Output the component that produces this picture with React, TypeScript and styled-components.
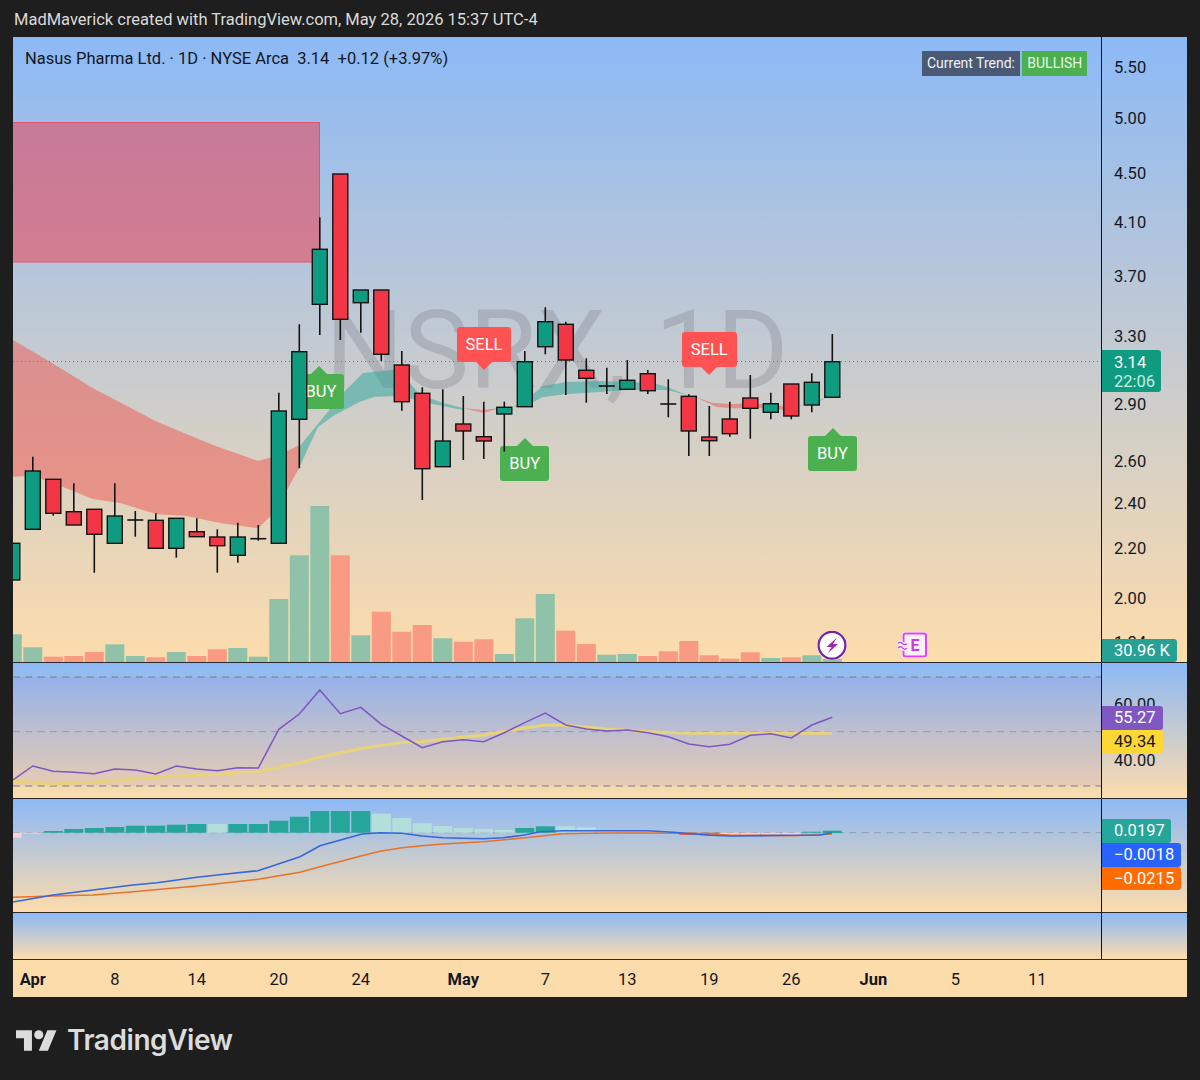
import { createGlobalStyle, styled } from "styled-components";

type Candle = [number, number, number, number, "g" | "r" | "d"];

// [bodyTop, bodyBottom, wickTop, wickBottom, kind], page pixels
const candles: Candle[] = [
  [543.3, 580, 543.3, 580, "g"],
  [471, 529.3, 456.7, 529.3, "g"],
  [479.3, 513.3, 479.3, 515.7, "r"],
  [511.7, 525, 483.3, 525, "r"],
  [509.3, 534.3, 509.3, 572.7, "r"],
  [516, 543.3, 483.3, 543.3, "g"],
  [520, 520, 511, 536.7, "d"],
  [520.3, 548.3, 513.3, 548.3, "r"],
  [518.3, 548.3, 518.3, 557.7, "g"],
  [531.7, 536.7, 518.3, 536.7, "r"],
  [537, 545.7, 529.3, 572.7, "r"],
  [537, 555.3, 522.7, 562.7, "g"],
  [538.7, 538.7, 525, 540.7, "d"],
  [411, 543.3, 392.7, 543.3, "g"],
  [351.7, 419.3, 324.3, 468.3, "g"],
  [249.3, 304.3, 217.3, 335, "g"],
  [174, 319.3, 174, 340, "r"],
  [290, 302.7, 290, 332.7, "g"],
  [290, 354.3, 290, 361, "r"],
  [365, 401.7, 351, 410.7, "r"],
  [393.3, 468.7, 387.3, 500, "r"],
  [441, 466.7, 389.3, 466.7, "g"],
  [424, 431, 396, 460, "r"],
  [436.7, 441, 401.7, 459, "r"],
  [407.3, 414, 401.7, 451.7, "g"],
  [361.7, 406.7, 351, 406.7, "g"],
  [321.7, 346.7, 307.3, 354.3, "g"],
  [324.3, 360, 321.7, 395, "r"],
  [370.3, 378.3, 358.3, 402.7, "r"],
  [386, 386, 367.7, 394, "d"],
  [380.3, 389.3, 360, 389.3, "g"],
  [373.7, 390.7, 370, 394, "r"],
  [404, 404, 379.3, 417.3, "d"],
  [396.3, 431, 394.3, 456, "r"],
  [437, 440.7, 406, 456, "r"],
  [419, 433.7, 401.7, 436.7, "r"],
  [398, 408.3, 375, 438.7, "r"],
  [403.7, 412.3, 392.7, 419.3, "g"],
  [384, 416, 384, 419.3, "r"],
  [382.3, 405, 373.3, 412.3, "g"],
  [361.7, 397.3, 334, 397.3, "g"],
];

const volumes: [number, "g" | "r"][] = [
  [634.3, "g"], [647.3, "g"], [656.7, "r"], [656, "r"], [652, "r"], [644.3, "g"], [656, "g"],
  [657.3, "r"], [652, "g"], [656, "r"], [649.3, "r"], [648, "g"], [656.7, "g"], [599, "g"],
  [555.3, "g"], [506, "g"], [555.3, "r"], [635.3, "g"], [611.7, "r"], [631.7, "r"], [625, "r"],
  [638.3, "g"], [641.7, "r"], [639.3, "r"], [654, "g"], [618.3, "g"], [594, "g"], [630.7, "r"],
  [644, "r"], [654.7, "g"], [654, "g"], [656, "r"], [651.3, "r"], [641, "r"], [655.3, "r"],
  [658.7, "r"], [652.3, "r"], [658, "g"], [657.3, "r"], [655.3, "g"], [659, "g"],
];

const rsi = [
  780, 766, 771.3, 772.3, 773.7, 769, 770, 774, 766, 769, 770.7, 767.7, 768, 729.3, 714, 690, 713.7,
  707.3, 724.3, 736, 747.7, 741.7, 739.7, 741.7, 732.7, 722.7, 713, 725, 729, 731, 730, 732.7, 736.7,
  744, 746.7, 744.3, 735.3, 733.7, 738, 725, 717.3,
];

const rsiMa = "13,781 50,784 93,782.3 157,777.3 217,774.3 258,771.7 300,762.7 320,757.3 360,748.7 400,742.7 420,741.7 483,735 523,728.3 545,725 563,725 607,729 648,731.7 689,733.3 771,733.3 820,733.3 832,733";

const macdLine = "13,902 53,895 93,890 133,885 157,882.7 197,877.3 217,875 258,870.7 300,856.7 320,845.7 362,834 380,832.7 402,833.3 422,836 443,837.7 483,838.7 503,837.7 523,835.3 540,831.7 563,830.7 607,830.7 647,830.7 673,832.3 710,835.3 730,836 787,835.3 820,835 832,832.7";
const signalLine = "13,897.3 53,896 93,895 133,891.7 197,886 258,879.3 300,872.3 320,866.7 362,855.7 380,851.3 402,847.7 422,845.7 443,844 483,841.7 523,838 563,833.7 607,833 647,833 687,833.3 730,835 793,835.7 832,834";

// [top, bottom, tone] for the MACD histogram
const hist: [number, number, "dt" | "lt" | "dr" | "lr"][] = [
  [832.7, 837.7, "lr"], [832.7, 833.7, "lr"], [831, 832.7, "dt"], [829, 832.7, "dt"], [828, 832.7, "dt"],
  [827, 832.7, "dt"], [825.7, 832.7, "dt"], [825.7, 832.7, "dt"], [824.7, 832.7, "dt"], [824, 832.7, "dt"],
  [824, 832.7, "lt"], [824, 832.7, "dt"], [824, 832.7, "dt"], [820.7, 832.7, "dt"], [816.7, 832.7, "dt"],
  [811, 832.7, "dt"], [811, 832.7, "dt"], [811, 832.7, "dt"], [813.7, 832.7, "lt"], [818, 832.7, "lt"],
  [823.3, 832.7, "lt"], [826, 832.7, "lt"], [828, 832.7, "lt"], [829, 832.7, "lt"], [830, 832.7, "lt"],
  [828, 832.7, "dt"], [826.3, 832.7, "dt"], [826.3, 832.7, "lt"], [827.3, 832.7, "lt"], [830.7, 832.7, "lt"],
  [831.7, 832.7, "lt"], [832, 832.7, "lt"], [832, 833, "lt"], [832.7, 835, "dr"], [832.7, 835.3, "dr"],
  [832.7, 835.5, "lr"], [832.7, 835.5, "lr"], [832.7, 835.5, "lr"], [832.7, 835, "lr"], [831.7, 832.7, "dt"],
  [830.7, 833, "dt"],
];

const barX = (i: number) => 12.3 + 20.5 * i;

const GlobalStyle = createGlobalStyle`
  html, body {
    margin: 0;
    background: #1e1e1e;
    font-family: Roboto, "Liberation Sans", sans-serif;
  }
`;

const Page = styled.div`
  width: 1200px;
  height: 1080px;
  display: flex;
  flex-direction: column;
  background: #1e1e1e;
`;

const Caption = styled.div`
  height: 37px;
  padding: 3px 0 0 14px;
  box-sizing: border-box;
  color: #dadada;
  font-size: 16.5px;
  line-height: 34px;
  white-space: nowrap;
`;

const Frame = styled.div`
  margin-left: 13px;
  width: 1174px;
  height: 960px;
  display: flex;
  flex-direction: column;
`;

const Pane = styled.div<{ $height: number }>`
  height: ${(p) => p.$height}px;
  flex: none;
  display: flex;
  box-sizing: border-box;
  border-bottom: 1px solid #2a2a2e;
  background: linear-gradient(#8cb9f6, #fddcac);
`;

const Plot = styled.div`
  position: relative;
  width: 1088px;
  flex: none;
  overflow: hidden;
`;

const Axis = styled.div`
  position: relative;
  flex: 1;
  border-left: 1px solid #111;
  overflow: hidden;
`;

const Layer = styled.svg`
  position: absolute;
  left: 0;
  top: 0;
  width: 100%;
  height: 100%;
`;

const Watermark = styled.div`
  position: absolute;
  left: 0;
  right: 0;
  top: 248.5px;
  text-align: center;
  font-size: 110px;
  line-height: 130px;
  color: rgba(120, 123, 134, 0.3);
  white-space: nowrap;
`;

const Legend = styled.div`
  position: absolute;
  left: 12px;
  top: 11.5px;
  font-size: 16.5px;
  line-height: 20px;
  color: #131722;
  white-space: pre;
`;

const TrendBox = styled.div`
  position: absolute;
  left: 908.7px;
  top: 13.7px;
  display: flex;
  gap: 2px;
  font-size: 14px;
  line-height: 25.5px;
`;

const TrendCell = styled.div<{ $bull?: boolean }>`
  height: 25.3px;
  padding: 0 ${(p) => (p.$bull ? 5 : 5.3)}px;
  color: ${(p) => (p.$bull ? "#e6f7e6" : "#f1f3f6")};
  background: ${(p) => (p.$bull ? "#4caf50" : "#4a5a75")};
`;

const Signal = styled.div<{ $x: number; $y: number; $w: number; $buy?: boolean }>`
  position: absolute;
  left: ${(p) => p.$x - 13}px;
  top: ${(p) => p.$y - 37}px;
  width: ${(p) => p.$w}px;
  height: 35px;
  border-radius: 3px;
  background: ${(p) => (p.$buy ? "#4caf50" : "#ff5252")};
  color: #fff;
  font-size: 16.5px;
  line-height: 35px;
  text-align: center;

  &::after {
    content: "";
    position: absolute;
    left: 50%;
    margin-left: -8px;
    border-left: 8px solid transparent;
    border-right: 8px solid transparent;
    ${(p) =>
      p.$buy
        ? "top: -8px; border-bottom: 8px solid #4caf50;"
        : "bottom: -8px; border-top: 8px solid #ff5252;"}
  }
`;

const AxisLabel = styled.div<{ $y: number }>`
  position: absolute;
  left: 12px;
  top: ${(p) => p.$y - 9.5}px;
  font-size: 16.5px;
  line-height: 20px;
  color: #131722;
`;

const TagStack = styled.div<{ $top: number }>`
  position: relative;
  display: flex;
  flex-direction: column;
  align-items: flex-start;
  gap: 0.3px;
  padding-top: ${(p) => p.$top}px;
`;

const Tag = styled.div<{ $w: number; $bg: string; $dark?: boolean }>`
  width: ${(p) => p.$w}px;
  height: 23.5px;
  box-sizing: border-box;
  padding-left: 12px;
  border-radius: 0 3px 3px 0;
  background: ${(p) => p.$bg};
  color: ${(p) => (p.$dark ? "#131722" : "#fff")};
  font-size: 16.5px;
  line-height: 24px;
  white-space: nowrap;
`;

const LastPrice = styled.div`
  width: 59px;
  height: 42.5px;
  box-sizing: border-box;
  padding: 3px 0 0 12px;
  border-radius: 0 3px 3px 0;
  background: #0e9b7f;
  color: #fff;
  font-size: 16.5px;
  line-height: 19px;
`;

const LastPriceTimer = styled.div`
  color: #c4f0e4;
`;

const VolumeTag = styled.div`
  position: absolute;
  left: 0;
  bottom: 0;
`;

const PriceTag = styled.div`
  position: absolute;
  left: 0;
  top: 312.5px;
`;

const TimeAxis = styled.div`
  height: 37px;
  flex: none;
  box-sizing: border-box;
  padding: 10px 0 0 9.55px;
  display: grid;
  grid-template-columns: repeat(53, 20.5px);
  background: #fddcac;
`;

const TimeLabel = styled.div<{ $bar: number; $bold?: boolean }>`
  grid-column: ${(p) => p.$bar};
  justify-self: center;
  font-size: 16.5px;
  line-height: 20px;
  font-weight: ${(p) => (p.$bold ? 700 : 400)};
  color: #131722;
`;

const Footer = styled.div`
  display: flex;
  align-items: center;
  gap: 10px;
  padding: 26px 0 0 16px;
`;

const LogoMark = styled.svg`
  width: 41px;
  height: 21px;
  flex: none;
`;

const LogoText = styled.div`
  font-family: Inter, Roboto, sans-serif;
  font-size: 28px;
  line-height: 34px;
  font-weight: 600;
  letter-spacing: -0.45px;
  color: #dcdcdc;
`;

const histFill = { dt: "#26a69a", lt: "#b2dfdb", dr: "#d9634f", lr: "#ffcdd2" };

function points(ys: number[]) {
  return ys.map((y, i) => `${i === 0 ? 13 : barX(i)},${y}`).join(" ");
}

const Wave = () => (
  <>
    <path d="M898 643.5c1.5-1.6 3-1.6 4.5 0s3 1.6 4.5 0" fill="none" stroke="#fff" strokeWidth="4" />
    <path d="M898 648c1.5-1.6 3-1.6 4.5 0s3 1.6 4.5 0" fill="none" stroke="#fff" strokeWidth="4" />
    <path d="M898 643.5c1.5-1.6 3-1.6 4.5 0s3 1.6 4.5 0" fill="none" stroke="#d946ef" strokeWidth="1.6" />
    <path d="M898 648c1.5-1.6 3-1.6 4.5 0s3 1.6 4.5 0" fill="none" stroke="#d946ef" strokeWidth="1.6" />
  </>
);

const PriceChart = () => (
  <Pane $height={626}>
    <Plot>
      <Watermark>NSRX, 1D</Watermark>

      <Layer viewBox="13 37 1088 625">
        <rect x="12" y="122.5" width="307.5" height="139.5" fill="rgba(242,54,69,0.5)" stroke="#e4536c" strokeWidth="1" />
        <polygon
          fill="rgba(239,83,80,0.5)"
          points="13,340 50,361.7 93,388.3 157,421.7 213,445 258,461 280,455 299,445 299,468 287,490 270,516.7 258,528.3 220,523 187,516 157,514.3 120,503 93,499 63,487 33,476 13,476.7"
        />
        <polygon
          fill="rgba(38,166,154,0.5)"
          points="299,447 317,425 343,393 363,373 393,370 410,383 420,395 443,403 463,408 463,410 433,404 400,396 375,396.7 360,401.7 333,416 318,427 299,468"
        />
        <polygon fill="rgba(239,83,80,0.5)" points="463,408 483,410 500,408 504,407 483,413" />
        <polygon
          fill="rgba(38,166,154,0.5)"
          points="513,407 532,395 543,386 567,382 600,381 627,382 653,383 667,387 687,395 695,397 667,390 653,390 627,390 600,392 567,394 543,397 533,402"
        />
        <polygon
          fill="rgba(239,83,80,0.5)"
          points="695,397 713,403 733,404 750,403 783,406 803,405 783,410 767,408.3 733,408.3 717,407"
        />
        <polygon fill="rgba(38,166,154,0.5)" points="803,405 815,402 827,397 815,404" />
        <line x1="13" x2="1101" y1="361.5" y2="361.5" stroke="#1aa38c" strokeWidth="1" strokeDasharray="1 3" />
        {volumes.map(([top, tone], i) => (
          <rect
            key={i}
            x={barX(i) - 9.5}
            y={top}
            width={19}
            height={662 - top}
            fill={tone === "g" ? "#8fc2a8" : "#f89a84"}
          />
        ))}
      </Layer>

      <Signal $x={294} $y={374} $w={50} $buy>
        <span>&nbsp;BUY</span>
      </Signal>
      <Signal $x={456.7} $y={327} $w={54.5}>
        SELL
      </Signal>
      <Signal $x={682} $y={331.7} $w={54.5}>
        SELL
      </Signal>
      <Signal $x={500.3} $y={445.7} $w={49} $buy>
        BUY
      </Signal>
      <Signal $x={808} $y={435.7} $w={49} $buy>
        BUY
      </Signal>

      <Layer viewBox="13 37 1088 625">
        {candles.map(([top, bottom, wickTop, wickBottom, kind], i) => {
          const x = barX(i);
          return (
            <g key={i}>
              <line x1={x} x2={x} y1={wickTop} y2={wickBottom} stroke="#131313" strokeWidth="1.6" />
              {kind === "d" ? (
                <line x1={x - 8} x2={x + 8} y1={top} y2={top} stroke="#131313" strokeWidth="1.6" />
              ) : (
                <rect
                  x={x - 7.5}
                  y={top}
                  width={15}
                  height={bottom - top}
                  fill={kind === "g" ? "#0e9b7f" : "#f23645"}
                  stroke="#131313"
                  strokeWidth="1.4"
                />
              )}
            </g>
          );
        })}

        <circle cx="832" cy="645.3" r="14.8" fill="#fff" />
        <circle cx="832" cy="645.3" r="13.4" fill="#fff" stroke="#7b1fa2" strokeWidth="2.2" />
        <path d="M837 637.5 L826.5 647 H831.5 L828 653 L838 644 H833 Z" fill="#9c27b0" />

        <rect x="902" y="632" width="25" height="26" rx="2.5" fill="#fff" />
        <rect x="903.5" y="633.5" width="22.5" height="23" rx="2" fill="#fdf1f7" stroke="#d946ef" strokeWidth="2" />
        <Wave />
        <text x="915" y="651" textAnchor="middle" fontSize="16" fontWeight="700" fontFamily="Roboto, sans-serif" fill="#c93de0">
          E
        </text>
      </Layer>

      <Legend>{"Nasus Pharma Ltd. · 1D · NYSE Arca  3.14  +0.12 (+3.97%)"}</Legend>
      <TrendBox>
        <TrendCell>Current Trend:</TrendCell>
        <TrendCell $bull>BULLISH</TrendCell>
      </TrendBox>
    </Plot>

    <Axis>
      <AxisLabel $y={30}>5.50</AxisLabel>
      <AxisLabel $y={81}>5.00</AxisLabel>
      <AxisLabel $y={136}>4.50</AxisLabel>
      <AxisLabel $y={185}>4.10</AxisLabel>
      <AxisLabel $y={239}>3.70</AxisLabel>
      <AxisLabel $y={299}>3.30</AxisLabel>
      <AxisLabel $y={367}>2.90</AxisLabel>
      <AxisLabel $y={424}>2.60</AxisLabel>
      <AxisLabel $y={466}>2.40</AxisLabel>
      <AxisLabel $y={511}>2.20</AxisLabel>
      <AxisLabel $y={561}>2.00</AxisLabel>
      <AxisLabel $y={605}>1.84</AxisLabel>
      <PriceTag>
        <LastPrice>
          3.14
          <LastPriceTimer>22:06</LastPriceTimer>
        </LastPrice>
      </PriceTag>
      <VolumeTag>
        <Tag $w={75} $bg="#27a193">
          30.96 K
        </Tag>
      </VolumeTag>
    </Axis>
  </Pane>
);

const RsiPane = () => (
  <Pane $height={136}>
    <Plot>
      <Layer viewBox="13 663 1088 135">
        <rect x="13" y="677" width="1088" height="109" fill="rgba(126,87,194,0.1)" />
        <line x1="13" x2="1101" y1="677" y2="677" stroke="#787b86" strokeDasharray="7 5.3" />
        <line x1="13" x2="1101" y1="731.7" y2="731.7" stroke="rgba(120,123,134,0.55)" strokeDasharray="7 5.3" />
        <line x1="13" x2="1101" y1="786" y2="786" stroke="#787b86" strokeDasharray="7 5.3" />
        <polyline points={rsiMa} fill="none" stroke="#e9d27c" strokeWidth="3" />
        <polyline points={points(rsi)} fill="none" stroke="#7e57c2" strokeWidth="1.5" />
      </Layer>
    </Plot>
    <Axis>
      <AxisLabel $y={41}>60.00</AxisLabel>
      <AxisLabel $y={97}>40.00</AxisLabel>
      <TagStack $top={43}>
        <Tag $w={60.7} $bg="#7e57c2">
          55.27
        </Tag>
        <Tag $w={60.7} $bg="#fdd835" $dark>
          49.34
        </Tag>
      </TagStack>
    </Axis>
  </Pane>
);

const MacdPane = () => (
  <Pane $height={114}>
    <Plot>
      <Layer viewBox="13 799 1088 113">
        <line x1="13" x2="1101" y1="832.7" y2="832.7" stroke="rgba(120,123,134,0.55)" strokeDasharray="7 5.3" />
        {hist.map(([top, bottom, tone], i) => (
          <rect key={i} x={barX(i) - 9.5} y={top} width={19} height={bottom - top} fill={histFill[tone]} />
        ))}
        <polyline points={signalLine} fill="none" stroke="#e8722a" strokeWidth="1.6" />
        <polyline points={macdLine} fill="none" stroke="#3566dc" strokeWidth="1.6" />
      </Layer>
    </Plot>
    <Axis>
      <TagStack $top={20.3}>
        <Tag $w={68.7} $bg="#26a69a">
          0.0197
        </Tag>
        <Tag $w={78.7} $bg="#2962ff">
          −0.0018
        </Tag>
        <Tag $w={78.7} $bg="#ff6d00">
          −0.0215
        </Tag>
      </TagStack>
    </Axis>
  </Pane>
);

const ticks: [number, string, boolean?][] = [
  [1, "Apr", true],
  [5, "8"],
  [9, "14"],
  [13, "20"],
  [17, "24"],
  [22, "May", true],
  [26, "7"],
  [30, "13"],
  [34, "19"],
  [38, "26"],
  [42, "Jun", true],
  [46, "5"],
  [50, "11"],
];

export default function App() {
  return (
    <Page>
      <GlobalStyle />
      <Caption>MadMaverick created with TradingView.com, May 28, 2026 15:37 UTC-4</Caption>

      <Frame>
        <PriceChart />
        <RsiPane />
        <MacdPane />
        <Pane $height={47}>
          <Plot />
          <Axis />
        </Pane>
        <TimeAxis>
          {ticks.map(([bar, label, bold]) => (
            <TimeLabel key={label} $bar={bar} $bold={bold}>
              {label}
            </TimeLabel>
          ))}
        </TimeAxis>
      </Frame>

      <Footer>
        <LogoMark viewBox="0 4 36 18">
          <path d="M14 22H7V11H0V4h14v18zM28 22h-8l7.5-18h8L28 22z" fill="#dcdcdc" />
          <circle cx="20" cy="8" r="4" fill="#dcdcdc" />
        </LogoMark>
        <LogoText>TradingView</LogoText>
      </Footer>
    </Page>
  );
}
